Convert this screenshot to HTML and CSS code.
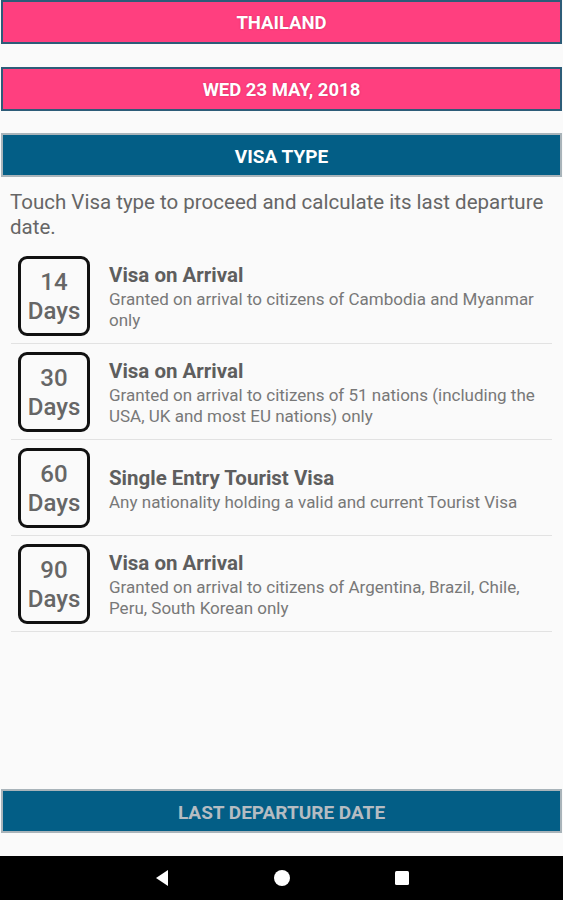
FILE: index.html
```html
<!DOCTYPE html>
<html lang="en">
<head>
    <meta charset="UTF-8">
    <meta name="viewport" content="width=device-width, initial-scale=1.0">
    <title>Visa Calculator</title>
    <link rel="stylesheet" href="styles.css">
</head>
<body>
    <div class="screen">
        <div class="content">
            <div class="bar pink country">THAILAND</div>
            <div class="bar pink">WED 23 MAY, 2018</div>
            <div class="bar blue">VISA TYPE</div>
            <p class="intro">Touch Visa type to proceed and calculate its last departure date.</p>

            <ul class="visa-list">
                <li class="visa">
                    <div class="days"><span>14</span><span>Days</span></div>
                    <div class="info">
                        <div class="title">Visa on Arrival</div>
                        <div class="desc">Granted on arrival to citizens of Cambodia and Myanmar only</div>
                    </div>
                </li>
                <li class="visa">
                    <div class="days"><span>30</span><span>Days</span></div>
                    <div class="info">
                        <div class="title">Visa on Arrival</div>
                        <div class="desc">Granted on arrival to citizens of 51 nations (including the USA, UK and most EU nations) only</div>
                    </div>
                </li>
                <li class="visa">
                    <div class="days"><span>60</span><span>Days</span></div>
                    <div class="info">
                        <div class="title">Single Entry Tourist Visa</div>
                        <div class="desc">Any nationality holding a valid and current Tourist Visa</div>
                    </div>
                </li>
                <li class="visa">
                    <div class="days"><span>90</span><span>Days</span></div>
                    <div class="info">
                        <div class="title">Visa on Arrival</div>
                        <div class="desc">Granted on arrival to citizens of Argentina, Brazil, Chile, Peru, South Korean only</div>
                    </div>
                </li>
            </ul>

            <div class="bar blue disabled">LAST DEPARTURE DATE</div>
        </div>

        <div class="navbar">
            <svg width="16" height="18" viewBox="0 0 16 18"><path d="M14 1 L2 9 L14 17 Z" fill="#fff"/></svg>
            <svg width="18" height="18" viewBox="0 0 18 18"><circle cx="9" cy="9" r="8" fill="#fff"/></svg>
            <svg width="16" height="16" viewBox="0 0 16 16"><rect x="1" y="1" width="14" height="14" rx="1.5" fill="#fff"/></svg>
        </div>
    </div>
</body>
</html>
```

FILE: styles.css
```css
body {
    margin: 0;
    padding: 0;
    font-family: Roboto, "Liberation Sans", sans-serif;
    background-color: #fafafa;
}
.screen {
    display: flex;
    flex-direction: column;
    height: 900px;
}
.content {
    flex: 1;
    display: flex;
    flex-direction: column;
}
.bar {
    height: 38px;
    padding-top: 2px;
    display: flex;
    align-items: center;
    justify-content: center;
    font-weight: bold;
    font-size: 18.5px;
    color: #fff;
    text-shadow: 0 0 2px rgba(120, 0, 40, 0.35);
    border: 2px solid #2d5c78;
    margin: 0 1px 22px 1px;
}
.country {
    margin-bottom: 23px;
}
.pink {
    background-color: #ff3f7f;
}
.blue {
    background-color: #035e86;
    border-color: #a9b4ba;
    font-size: 19px;
    text-shadow: none;
    margin-bottom: 0;
}
.disabled {
    color: #b5bcc2;
    margin-top: auto;
    margin-bottom: 23px;
}
.intro {
    margin: 13px 10px 8px 10px;
    font-size: 20.5px;
    line-height: 25px;
    color: #666;
}
.visa-list {
    list-style: none;
    margin: 0 11px;
    padding: 0;
}
.visa {
    display: flex;
    align-items: center;
    padding: 8px 0 7px 7px;
    border-bottom: 1px solid #e2e2e2;
}
.days {
    width: 66px;
    height: 72px;
    padding-top: 2px;
    border: 3px solid #111;
    border-radius: 9px;
    display: flex;
    flex-direction: column;
    justify-content: center;
    align-items: center;
    font-size: 24px;
    font-weight: 500;
    line-height: 29px;
    color: #666;
    flex-shrink: 0;
}
.info {
    margin-left: 19px;
    padding-right: 4px;
}
.title {
    font-size: 20.5px;
    font-weight: bold;
    color: #5e5e5e;
    line-height: 28px;
}
.desc {
    font-size: 17px;
    color: #787878;
    line-height: 21px;
}
.navbar {
    height: 44px;
    background-color: #000;
    display: flex;
    align-items: center;
    justify-content: center;
    gap: 103px;
}
```
